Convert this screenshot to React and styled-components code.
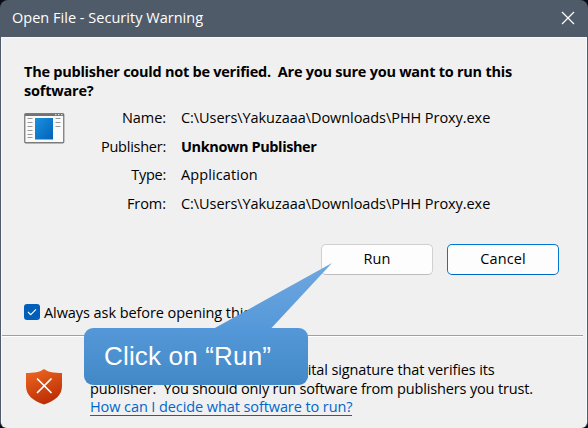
import React from 'react';
import styled, { createGlobalStyle } from 'styled-components';

const GlobalStyle = createGlobalStyle`
  *, *::before, *::after { box-sizing: border-box; }
  body {
    margin: 0;
    overflow: hidden;
    background: #070d18;
    font-family: "Open Sans", "Noto Sans", sans-serif;
    font-size: 14.5px;
    color: #000;
  }
`;

const Dialog = styled.div`
  position: relative;
  width: 588px;
  height: 428px;
  display: flex;
  flex-direction: column;
  background: #505b69;
  border-radius: 8px 8px 6px 6px;
  overflow: hidden;
`;

const TitleBar = styled.header`
  flex: none;
  height: 37px;
  display: flex;
  align-items: center;
  justify-content: space-between;
  padding: 0 13px 2px 12px;
  color: #fff;
`;

const Text = styled.span`
  white-space: pre;
  letter-spacing: ${(p) => p.$track || 0}px;
  font-weight: ${(p) => (p.$bold ? 700 : 400)};
`;

const Icon = styled.svg`
  display: block;
`;

const Body = styled.main`
  flex: 1;
  display: flex;
  flex-direction: column;
  margin: 0 1px;
  background: #f0f0f0;
  border: solid #fafafa;
  border-width: 1px 1px 0 1px;
  border-radius: 0 0 6px 6px;
`;

const Heading = styled.h1`
  margin: 0;
  padding: 24px 0 0 22px;
  height: 67px;
  display: flex;
  flex-direction: column;
  font-size: 14.5px;
  line-height: 19px;
`;

const Details = styled.section`
  display: grid;
  grid-template-columns: 59px 83px 1fr;
  padding-left: 22px;
  height: 121px;
`;

const IconCell = styled.div`
  padding-top: 8px;
`;

const Column = styled.div`
  display: flex;
  flex-direction: column;
  line-height: 28.6px;
  align-items: ${(p) => (p.$end ? 'flex-end' : 'flex-start')};
  padding-left: ${(p) => (p.$end ? 0 : 15)}px;
  margin-top: -1px;
`;

const Actions = styled.div`
  display: flex;
  justify-content: flex-end;
  gap: 14px;
  padding: 18px 27px 0 0;
`;

const Button = styled.button`
  width: 112px;
  height: 31px;
  padding: 0 0 3px;
  font: inherit;
  color: #000;
  background: #fdfdfd;
  border: 1px solid ${(p) => (p.$focused ? '#0078d4' : '#d0d0d0')};
  border-bottom-color: ${(p) => (p.$focused ? '#0067c0' : '#bcbcbc')};
  border-radius: 5px;
`;

const CheckRow = styled.label`
  display: flex;
  align-items: center;
  gap: 4px;
  height: 20px;
  margin: 27px 0 0 22px;
`;

const CheckBox = styled.span`
  width: 16px;
  height: 16px;
  display: flex;
  align-items: center;
  justify-content: center;
  background: #005fb8;
  border-radius: 3px;
`;

const Divider = styled.hr`
  flex: none;
  width: 581px;
  height: 2px;
  margin: 13px 0 0;
  border: 0;
  border-top: 1px solid #a0a0a0;
  border-bottom: 1px solid #fff;
`;

const Footer = styled.footer`
  display: flex;
  gap: 28px;
  padding: 24px 0 0 24px;
`;

const ShieldCell = styled.div`
  padding-top: 8px;
  height: 44px;
`;

const Notice = styled.div`
  display: flex;
  flex-direction: column;
  line-height: 18.7px;
`;

const Link = styled.a`
  align-self: flex-start;
  height: 18px;
  line-height: 18.7px;
  color: #0066cc;
  border-bottom: 1px solid #0066cc;
`;

const Callout = styled.aside`
  position: absolute;
  left: 84px;
  top: 328px;
  width: 224px;
  height: 57px;
  padding: 0 0 1px 20px;
  display: flex;
  align-items: center;
  border-radius: 9px;
  background: linear-gradient(#5598d9, #4288c6);
  color: #fff;
  font-family: "Liberation Sans", Arial, sans-serif;
  font-size: 26px;
`;

const Tail = styled.svg`
  position: absolute;
  left: 130px;
  top: -65px;
`;

const AppIcon = () => (
  <Icon width="41" height="31" viewBox="0 0 41 31">
    <rect x=".75" y=".75" width="39" height="29" rx="1" fill="#fafafa" stroke="#7b7b7b" strokeWidth="1.3" />
    <path d="M1 1h39v2H1z" fill="#737373" />
    <path d="M31 1.7h1.5M34 1.7h1.5M37 1.7h1.5" stroke="#eee" />
    <path d="M3.5 5.5h5M3.5 9.5h5M3.5 13.5h5M3.5 17.5h5M3.5 21.5h5M3.5 24.5h5M31.5 5.5h5M31.5 9.5h5M31.5 13.5h5" stroke="#999" />
    <defs>
      <linearGradient id="pane" x1="0" y1="0" x2="1" y2="1">
        <stop stopColor="#1a91df" />
        <stop offset="1" stopColor="#0262b8" />
      </linearGradient>
    </defs>
    <rect x="11" y="5" width="18" height="21.5" fill="url(#pane)" />
  </Icon>
);

const Shield = () => (
  <Icon width="36" height="36" viewBox="0 0 36 36">
    <defs>
      <linearGradient id="shield" x1="0" y1="0" x2=".4" y2="1">
        <stop stopColor="#f06a22" />
        <stop offset="1" stopColor="#bd3006" />
      </linearGradient>
    </defs>
    <path d="M18 0c4 3.2 10 4 18 4v13c0 9-6.5 14.6-18 18.5C6.500 31.600 0 26 0 17V4c8 0 14-.8 18-4z" fill="url(#shield)" />
    <path d="M11.500 10l13.500 13.500M25 10l-13.500 13.500" stroke="#fff" strokeWidth="1.7" strokeLinecap="round" />
  </Icon>
);

const rows = [
  { label: 'Name:', track: -0.05, value: 'C:\\Users\\Yakuzaaa\\Downloads\\PHH Proxy.exe', valueTrack: -0.06 },
  { label: 'Publisher:', track: -0.25, value: 'Unknown Publisher', valueTrack: -0.4, bold: true },
  { label: 'Type:', track: -0.25, value: 'Application', valueTrack: 0.1 },
  { label: 'From:', track: -0.05, value: 'C:\\Users\\Yakuzaaa\\Downloads\\PHH Proxy.exe', valueTrack: -0.06 },
];

export default function App() {
  return (
    <>
      <GlobalStyle />
      <Dialog>
        <TitleBar>
          <Text $track={0.02}>Open File - Security Warning</Text>
          <Icon width="14" height="14" viewBox="0 0 14 14">
            <path d="M1 1l12 12M13 1L1 13" stroke="#fff" strokeWidth="1.2" />
          </Icon>
        </TitleBar>
        <Body>
          <Heading>
            <Text $bold $track={-0.25}>{'The publisher could not be verified.  Are you sure you want to run this'}</Text>
            <Text $bold $track={-0.2}>software?</Text>
          </Heading>
          <Details>
            <IconCell><AppIcon /></IconCell>
            <Column $end>
              {rows.map((r) => <Text key={r.label} $track={r.track}>{r.label}</Text>)}
            </Column>
            <Column>
              {rows.map((r) => <Text key={r.label} $bold={r.bold} $track={r.valueTrack}>{r.value}</Text>)}
            </Column>
          </Details>
          <Actions>
            <Button><Text $track={0.1}>Run</Text></Button>
            <Button $focused><Text $track={0.1}>Cancel</Text></Button>
          </Actions>
          <CheckRow>
            <CheckBox>
              <Icon width="10" height="8" viewBox="0 0 10 8">
                <path d="M1 4l2.700 2.700L9 1.300" fill="none" stroke="#fff" strokeWidth="1.1" />
              </Icon>
            </CheckBox>
            <Text $track={-0.07}>Always ask before opening this file</Text>
          </CheckRow>
          <Divider />
          <Footer>
            <ShieldCell><Shield /></ShieldCell>
            <Notice>
              <Text $track={-0.12}>This file does not have a valid digital signature that verifies its</Text>
              <Text $track={-0.145}>{'publisher.  You should only run software from publishers you trust.'}</Text>
              <Link><Text $track={-0.09}>How can I decide what software to run?</Text></Link>
            </Notice>
          </Footer>
        </Body>
        <Callout>
          <Tail width="119" height="66" viewBox="0 0 119 66">
            <defs>
              <linearGradient id="tail" x1="0" y1="0" x2="0" y2="1">
                <stop stopColor="#70a7df" />
                <stop offset="1" stopColor="#5598d9" />
              </linearGradient>
            </defs>
            <path d="M118 0L0 65.500h57z" fill="url(#tail)" />
          </Tail>
          <Text $track={0.17}>Click on “Run”</Text>
        </Callout>
      </Dialog>
    </>
  );
}
